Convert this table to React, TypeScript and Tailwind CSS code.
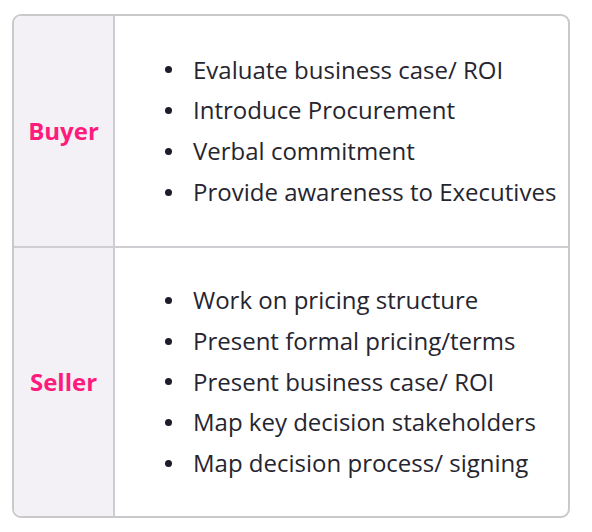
const rows = [
  {
    label: "Buyer",
    items: [
      "Evaluate business case/ ROI",
      "Introduce Procurement",
      "Verbal commitment",
      "Provide awareness to Executives",
    ],
    height: "h-[230px]",
  },
  {
    label: "Seller",
    items: [
      "Work on pricing structure",
      "Present formal pricing/terms",
      "Present business case/ ROI",
      "Map key decision stakeholders",
      "Map decision process/ signing",
    ],
    height: "h-[270px]",
  },
];

export default function App() {
  return (
    <div className="min-h-[532px] w-[592px] bg-white pl-[12px] pt-[14px] font-['Open_Sans',sans-serif]">
      <div className="flex w-[558px] flex-col overflow-hidden rounded-[9px] border-2 border-[#c9c8cb] bg-white">
        {rows.map((row, i) => (
          <div
            key={row.label}
            className={`flex ${row.height} ${i > 0 ? "border-t-2 border-[#cfcdd2]" : ""}`}
          >
            <div className="flex w-[101px] shrink-0 items-center justify-center border-r-2 border-[#cfcdd2] bg-[#f3f1f5]">
              <span className="text-[24px] font-bold text-[#ff1b7c]">{row.label}</span>
            </div>
            <ul className="flex flex-1 flex-col justify-center pl-[50px]">
              {row.items.map((item) => (
                <li key={item} className="flex items-center text-[24px] leading-[40.7px] text-[#26252f]">
                  <span className="mr-[21px] h-[7px] w-[7px] shrink-0 rounded-full bg-[#1d1c2a]" />
                  {item}
                </li>
              ))}
            </ul>
          </div>
        ))}
      </div>
    </div>
  );
}
